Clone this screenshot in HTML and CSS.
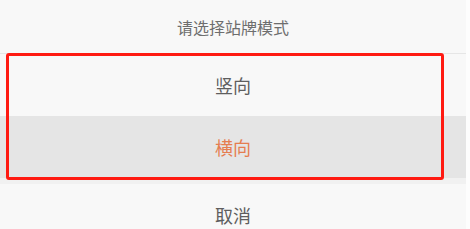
FILE: index.html
```html
<!DOCTYPE html>
<html lang="zh-CN">
<head>
    <meta charset="UTF-8">
    <meta name="viewport" content="width=device-width, initial-scale=1.0">
    <title>站牌模式</title>
    <link rel="stylesheet" href="styles.css">
</head>
<body>
    <div class="sheet">
        <div class="sheet-title">请选择站牌模式</div>
        <div class="options">
            <div class="option">竖向</div>
            <div class="option active">横向</div>
            <div class="highlight"></div>
        </div>
        <div class="gap"></div>
        <div class="option cancel">取消</div>
    </div>
</body>
</html>
```

FILE: styles.css
```css
body {
    margin: 0;
    background-color: #fdfdfd;
    font-family: "Noto Sans CJK SC", "Noto Sans", sans-serif;
    overflow: hidden;
}
.sheet {
    width: 466px;
    height: 229px;
    background-color: #f8f8f8;
    overflow: hidden;
}
.sheet-title {
    height: 54px;
    display: flex;
    align-items: center;
    justify-content: center;
    font-size: 16px;
    color: #6e6e6e;
    border-bottom: 1px solid #e6e6e6;
    box-sizing: border-box;
}
.options {
    position: relative;
}
.option {
    height: 62px;
    display: flex;
    align-items: center;
    justify-content: center;
    font-size: 18px;
    color: #5e5e5e;
    padding-bottom: 1px;
    box-sizing: border-box;
}
.option.active {
    background-color: #e5e5e5;
    color: #e57d50;
}
.highlight {
    position: absolute;
    left: 6px;
    top: -1px;
    width: 438px;
    height: 127px;
    border: 3px solid #ff1a12;
    border-radius: 3px;
    box-sizing: border-box;
}
.gap {
    height: 6px;
    background-color: #f1f1f1;
}
.cancel {
    height: 62px;
}
```
